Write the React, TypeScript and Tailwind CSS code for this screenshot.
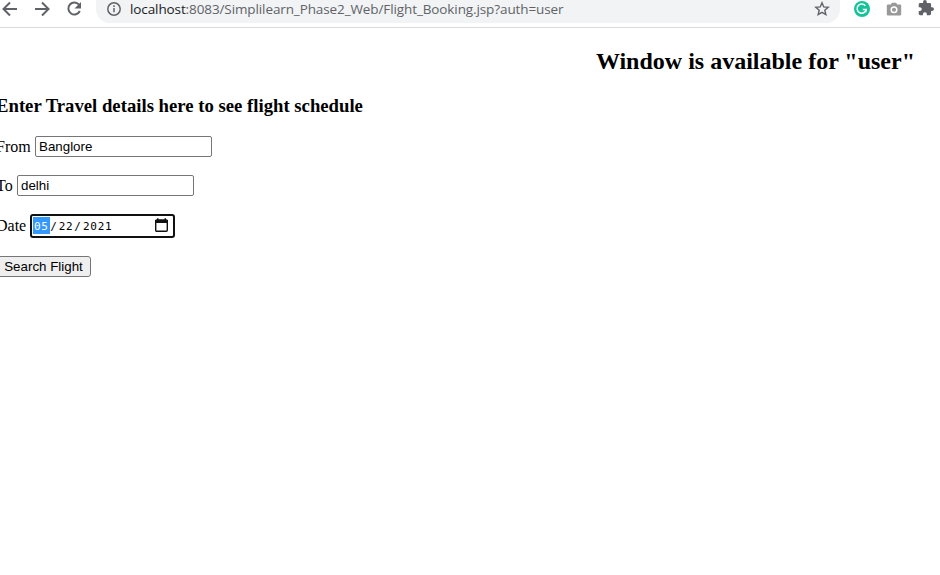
import React from 'react';

function Toolbar() {
  return (
    <header className="flex h-7 items-start overflow-hidden border-b border-[#d9dbde] bg-white text-[#5f6368]">
      <svg className="-ml-2 h-[18px] w-[30px] shrink-0" viewBox="0 0 30 18" fill="none" stroke="currentColor" strokeWidth="2">
        <path d="M25 9H12M18 2.500 11.500 9l6.500 6.500" />
      </svg>
      <svg className="ml-2 h-[18px] w-[24px] shrink-0" viewBox="0 0 24 18" fill="none" stroke="currentColor" strokeWidth="2">
        <path d="M5 9h13M12 2.500 18.500 9 12 15.500" />
      </svg>
      <svg className="ml-2 h-[18px] w-[24px] shrink-0" viewBox="0 0 24 18" fill="none">
        <path d="M17 4.700A6 6 0 1 0 17.800 11" stroke="currentColor" strokeWidth="2" />
        <path d="M19 2v6.500h-6.500z" fill="currentColor" />
      </svg>
      <div className="ml-[10px] flex h-[23px] w-[744px] shrink-0 items-start rounded-b-[14px] bg-[#f1f3f4]">
        <svg className="ml-[10px] mt-px h-4 w-4 shrink-0" viewBox="0 0 16 16" fill="none" stroke="currentColor" strokeWidth="1.500">
          <circle cx="8" cy="8" r="6.200" />
          <path d="M8 7v4.300M8 4.300v1.600" />
        </svg>
        <span className="ml-2 w-[434px] whitespace-nowrap font-['Open_Sans','Noto_Sans',sans-serif] text-[13.500px] leading-[18px] tracking-[-0.105px]">
          <span className="text-[#202124]">localhost</span>:8083/Simplilearn_Phase2_Web/Flight_Booking.jsp?auth=user
        </span>
        <svg className="ml-[250px] mt-px h-4 w-4 shrink-0" viewBox="0 0 16 16" fill="none" stroke="currentColor" strokeWidth="1.400">
          <path d="m8 1.800 1.750 4.100 4.450.4-3.400 2.900 1.050 4.400L8 11.300l-3.850 2.300 1.050-4.400-3.400-2.900 4.450-.4z" />
        </svg>
      </div>
      <svg className="ml-[14px] mt-px h-4 w-4 shrink-0" viewBox="0 0 16 16" fill="none">
        <circle cx="8" cy="8" r="8" fill="#15c39a" />
        <path d="M11.300 4.700A4.600 4.600 0 1 0 12.200 8.600H8.800" stroke="white" strokeWidth="1.500" />
        <path d="M11.900 8.200v3.100" stroke="white" strokeWidth="1.300" />
      </svg>
      <svg className="ml-4 mt-px h-4 w-4 shrink-0" viewBox="0 0 16 16">
        <path d="M2 3.500h2.700L6 1.700h4l1.300 1.800H14q1.200 0 1.200 1.200v8.600q0 1.200-1.200 1.200H2Q.8 14.500.8 13.300V4.700Q.8 3.500 2 3.500" fill="#999" />
        <circle cx="8" cy="8.800" r="2.800" fill="#999" stroke="white" strokeWidth="1.500" />
      </svg>
      <svg className="ml-4 h-4 w-4 shrink-0" viewBox="1 1 22 22" fill="currentColor">
        <path d="M20.500 11H19V7c0-1.100-.9-2-2-2h-4V3.500a2.500 2.500 0 0 0-5 0V5H4c-1.100 0-2 .9-2 2v3.800h1.500a2.700 2.700 0 0 1 0 5.400H2V20c0 1.100.9 2 2 2h3.800v-1.500a2.700 2.700 0 0 1 5.400 0V22H17c1.100 0 2-.9 2-2v-4h1.500a2.500 2.500 0 0 0 0-5z" />
      </svg>
    </header>
  );
}

export default function App() {
  return (
    <div className="h-[575px] w-[940px] overflow-hidden bg-white text-black">
      <Toolbar />
      <main className="-ml-[4px] font-['Liberation_Serif',serif] text-[16px]">
        <h2 className="mt-[19px] pr-[25px] text-right text-[24px] font-bold leading-[28px]">
          Window is available for "user"
        </h2>
        <h3 className="mt-5 text-[18.720px] font-bold leading-[22px]">Enter Travel details here to see flight schedule</h3>
        <form>
          <label className="mt-[19px] flex h-[21px] items-center">
            <span className="w-[39px]">From</span>
            <input className="h-[21px] w-[177px] rounded-[2px] border border-[#767676] bg-white px-[3px] font-['Liberation_Sans',sans-serif] text-[13.333px]" defaultValue="Banglore" />
          </label>
          <label className="mt-[18px] flex h-[21px] items-center">
            <span className="w-[21px]">To</span>
            <input className="h-[21px] w-[177px] rounded-[2px] border border-[#767676] bg-white px-[3px] font-['Liberation_Sans',sans-serif] text-[13.333px]" defaultValue="delhi" />
          </label>
          <div className="mt-[18px] flex h-6 items-center">
            <span className="w-[34px]">Date</span>
            <div className="flex h-6 w-[145px] items-start rounded-[3px] border-2 border-[#101010] bg-white pl-px pt-px font-['DejaVu_Sans_Mono',monospace] text-[11px] leading-[19px] tracking-[0.700px]">
              <span className="h-[17px] w-[17px] bg-[#3399ff] pl-px text-white">05</span>
              <span className="w-2 text-center">/</span>
              <span className="w-4 text-center">22</span>
              <span className="w-2 text-center">/</span>
              <span className="w-[31px] pl-px">2021</span>
              <svg className="ml-[41px] mt-px h-[15px] w-[15px]" viewBox="0 0 15 15">
                <rect x="1.700" y="2" width="11.600" height="11.300" rx="1" fill="none" stroke="#111" strokeWidth="1.400" />
                <path d="M1 2h13v3H1zM3 .3h1.500V3H3zM10.500.3H12V3h-1.500z" fill="#111" />
              </svg>
            </div>
          </div>
          <button type="button" className="mt-[18px] block h-[21px] w-[95px] rounded-[3px] border border-[#767676] bg-[#efefef] font-['Liberation_Sans',sans-serif] text-[13.333px] leading-[19px]">
            Search Flight
          </button>
        </form>
      </main>
    </div>
  );
}
